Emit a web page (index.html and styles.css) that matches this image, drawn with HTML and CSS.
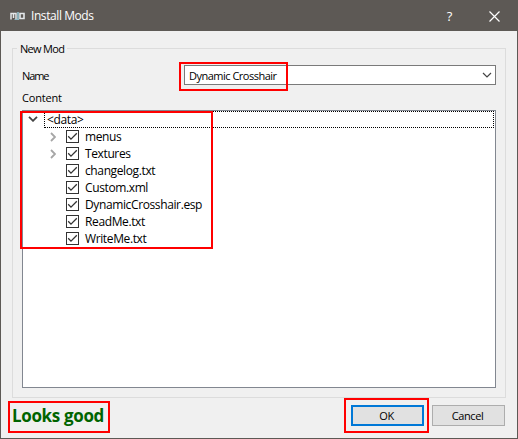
FILE: index.html
```html
<!DOCTYPE html>
<html lang="en">
<head>
<meta charset="utf-8">
<title>Install Mods</title>
<link rel="stylesheet" href="styles.css">
</head>
<body>
<svg class="defs" width="0" height="0">
  <symbol id="check" viewBox="0 0 13 13"><rect x=".5" y=".5" width="12" height="12" fill="#fff" stroke="#333"/><path d="M2.2 6.3 5 9.1 10.8 3.3" fill="none" stroke="#333" stroke-width="1.3"/></symbol>
  <symbol id="closed" viewBox="0 0 6 10"><path d="M1 1 5 5 1 9" fill="none" stroke="#a6a6a6" stroke-width="1.8"/></symbol>
</svg>
<div class="dialog">
  <header class="titlebar">
    <svg class="logo" width="15" height="8" viewBox="0 0 15 8" fill="none" stroke="#e4e8ea">
      <path d="M1 7.5V1.5H6V7.5M3.5 1.5V6" stroke-width="1.5"/><path d="M8 0V8" stroke="#8fb9c5" stroke-width="1.8"/><path d="M10 1.5H14V6.5H10Z" stroke-width="1.6"/><path d="M4.5 7.5H9" stroke="#8fb9c5"/>
    </svg>
    <h1>Install Mods</h1>
    <span class="help">?</span>
    <svg class="close" width="11" height="11" viewBox="0 0 11 11"><path d="M.5.5 10.5 10.5M10.5.5.5 10.5" stroke="#fff" stroke-width="1.2"/></svg>
  </header>
  <main>
    <fieldset class="group">
      <legend>New Mod</legend>
      <div class="name-row">
        <label>Name</label>
        <div class="combo mark mark-name"><span>Dynamic Crosshair</span>
          <svg width="10" height="6" viewBox="0 0 10 6"><path d="M1 1 5 5 9 1" fill="none" stroke="#444" stroke-width="1.2"/></svg>
        </div>
      </div>
      <div class="content-label">Content</div>
      <div class="tree mark mark-tree">
        <div class="root"><svg width="10" height="6" viewBox="0 0 10 6"><path d="M1 .8 5 4.8 9 .8" fill="none" stroke="#444" stroke-width="1.8"/></svg><span>&lt;data&gt;</span></div>
        <ul>
          <li><svg class="arrow"><use href="#closed"/></svg><svg class="box"><use href="#check"/></svg><span>menus</span></li>
          <li><svg class="arrow"><use href="#closed"/></svg><svg class="box"><use href="#check"/></svg><span>Textures</span></li>
          <li><svg class="arrow"></svg><svg class="box"><use href="#check"/></svg><span>changelog.txt</span></li>
          <li><svg class="arrow"></svg><svg class="box"><use href="#check"/></svg><span>Custom.xml</span></li>
          <li><svg class="arrow"></svg><svg class="box"><use href="#check"/></svg><span>DynamicCrosshair.esp</span></li>
          <li><svg class="arrow"></svg><svg class="box"><use href="#check"/></svg><span>ReadMe.txt</span></li>
          <li><svg class="arrow"></svg><svg class="box"><use href="#check"/></svg><span>WriteMe.txt</span></li>
        </ul>
      </div>
    </fieldset>
    <footer>
      <strong class="status mark mark-status">Looks good</strong>
      <div class="btn-wrap mark mark-ok"><button class="ok">OK</button></div>
      <button>Cancel</button>
    </footer>
  </main>
</div>
</body>
</html>
```

FILE: styles.css
```css
*, *::after { box-sizing: border-box; }
body { margin: 0; font: 11px/16px "Open Sans", "Noto Sans", sans-serif; letter-spacing: -0.4px; color: #000; overflow: hidden; }
svg { display: block; flex: none; }
.defs { position: absolute; }
.dialog { width: 518px; height: 439px; background: #f0f0f0; border: 1px solid #5d5955; display: flex; flex-direction: column; }
.titlebar { height: 30px; background: #5d5955; color: #fff; display: flex; align-items: center; padding: 0 17px 0 9px; flex: none; }
.titlebar h1 { margin: 0 0 0 6px; font-size: 12px; font-weight: 400; letter-spacing: -0.42px; flex: 1; }
.help { font-size: 13px; margin-right: 37px; }
main { padding: 17px 11px 0; }
.group { position: relative; margin: 0; border: 1px solid #dcdcdc; height: 350px; padding: 0 9px; min-width: 0; }
/* caption sits on the top border of the group */
legend { position: absolute; left: 4px; top: -8px; padding: 0 3px; background: #f0f0f0; letter-spacing: -0.7px; }
.name-row { display: flex; align-items: center; margin-top: 16px; height: 20px; }
.name-row label { width: 162px; padding-top: 1px; letter-spacing: -1.1px; }
.combo { flex: 1; height: 20px; background: #fff; border: 1px solid #7a7a7a; display: flex; align-items: center; justify-content: space-between; padding: 0 3px 0 4px; letter-spacing: -0.5px; }
.combo span { padding-top: 1px; }
.content-label { height: 16px; margin: 5px 0 4px; letter-spacing: -0.2px; }
.tree { height: 278px; background: #fff; border: 1px solid #828790; font-size: 12px; letter-spacing: -0.38px; }
.root { height: 17px; display: flex; align-items: center; padding: 0 1px 0 5px; }
.root svg { margin-bottom: 2px; }
.root span { flex: 1; height: 17px; margin-left: 6px; padding-left: 2px; border: 1px dotted #000; line-height: 15px; letter-spacing: -0.35px; }
ul { list-style: none; margin: 0; padding: 0; }
li { height: 17px; display: flex; align-items: center; padding-left: 27px; }
.arrow { width: 6px; height: 10px; margin-right: 10px; }
.box { width: 13px; height: 13px; margin-right: 6px; }
footer { display: flex; padding: 7px 0 0; }
.status { flex: 1; font-size: 17px; line-height: 22px; letter-spacing: -0.35px; color: #006400; }
.btn-wrap { margin-right: 8px; height: 21px; }
button { width: 73px; height: 21px; padding: 0 2px 0 0; border: 1px solid #adadad; background: #e1e1e1; color: #000; font: inherit; letter-spacing: -0.4px; display: block; margin-right: 1px; }
.btn-wrap button { margin: 0; }
.ok { border: 2px solid #0078d7; }
/* red callout frames drawn over the marked controls */
.mark { position: relative; }
.mark::after { content: ""; position: absolute; border: 2px solid #f00; pointer-events: none; }
.mark-name::after { left: -6px; top: -4px; width: 109px; height: 29px; }
.mark-tree::after { left: -3px; top: 0; width: 193px; height: 138px; }
.mark-status::after { left: -4px; top: -4px; width: 102px; height: 32px; }
.mark-ok::after { left: -7px; top: -7px; width: 85px; height: 35px; }
```
